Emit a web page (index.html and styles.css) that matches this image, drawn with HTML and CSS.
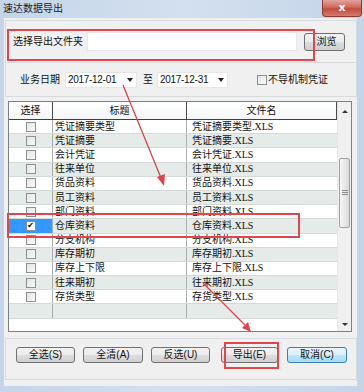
FILE: index.html
```html
<!DOCTYPE html>
<html lang="zh-CN">
<head>
    <meta charset="UTF-8">
    <title>速达数据导出</title>
    <link rel="stylesheet" href="styles.css">
</head>
<body>
    <div class="window">
        <div class="titlebar">
            <span class="title">速达数据导出</span>
            <div class="close">x</div>
        </div>

        <div class="client">
            <div class="panel folder-panel">
                <span class="label folder-label">选择导出文件夹</span>
                <div class="textbox"></div>
                <button class="btn browse">浏览</button>
            </div>

            <div class="panel date-panel">
                <span class="label date-label">业务日期</span>
                <div class="combo combo-from"><span>2017-12-01</span><span class="drop"></span></div>
                <span class="to">至</span>
                <div class="combo combo-to"><span>2017-12-31</span><span class="drop"></span></div>
                <label class="check-label"><span class="checkbox"></span>不导机制凭证</label>
            </div>

            <div class="grid">
                <div class="grid-body">
                    <div class="row head">
                        <div class="cell sel">选择</div>
                        <div class="cell name">标题</div>
                        <div class="cell file">文件名</div>
                    </div>
                    <div class="row">
                        <div class="cell sel"><span class="checkbox"></span></div>
                        <div class="cell name">凭证摘要类型</div>
                        <div class="cell file">凭证摘要类型.XLS</div>
                    </div>
                    <div class="row alt">
                        <div class="cell sel"><span class="checkbox"></span></div>
                        <div class="cell name">凭证摘要</div>
                        <div class="cell file">凭证摘要.XLS</div>
                    </div>
                    <div class="row">
                        <div class="cell sel"><span class="checkbox"></span></div>
                        <div class="cell name">会计凭证</div>
                        <div class="cell file">会计凭证.XLS</div>
                    </div>
                    <div class="row alt">
                        <div class="cell sel"><span class="checkbox"></span></div>
                        <div class="cell name">往来单位</div>
                        <div class="cell file">往来单位.XLS</div>
                    </div>
                    <div class="row">
                        <div class="cell sel"><span class="checkbox"></span></div>
                        <div class="cell name">货品资料</div>
                        <div class="cell file">货品资料.XLS</div>
                    </div>
                    <div class="row alt">
                        <div class="cell sel"><span class="checkbox"></span></div>
                        <div class="cell name">员工资料</div>
                        <div class="cell file">员工资料.XLS</div>
                    </div>
                    <div class="row">
                        <div class="cell sel"><span class="checkbox"></span></div>
                        <div class="cell name">部门资料</div>
                        <div class="cell file">部门资料.XLS</div>
                    </div>
                    <div class="row alt selected">
                        <div class="cell sel"><span class="checkbox checked">✔</span></div>
                        <div class="cell name">仓库资料</div>
                        <div class="cell file">仓库资料.XLS</div>
                    </div>
                    <div class="row">
                        <div class="cell sel"><span class="checkbox"></span></div>
                        <div class="cell name">分支机构</div>
                        <div class="cell file">分支机构.XLS</div>
                    </div>
                    <div class="row alt">
                        <div class="cell sel"><span class="checkbox"></span></div>
                        <div class="cell name">库存期初</div>
                        <div class="cell file">库存期初.XLS</div>
                    </div>
                    <div class="row">
                        <div class="cell sel"><span class="checkbox"></span></div>
                        <div class="cell name">库存上下限</div>
                        <div class="cell file">库存上下限.XLS</div>
                    </div>
                    <div class="row alt">
                        <div class="cell sel"><span class="checkbox"></span></div>
                        <div class="cell name">往来期初</div>
                        <div class="cell file">往来期初.XLS</div>
                    </div>
                    <div class="row">
                        <div class="cell sel"><span class="checkbox"></span></div>
                        <div class="cell name">存货类型</div>
                        <div class="cell file">存货类型.XLS</div>
                    </div>
                    <div class="row alt">
                        <div class="cell sel"></div>
                        <div class="cell name"></div>
                        <div class="cell file"></div>
                    </div>
                </div>
                <div class="scrollbar">
                    <div class="sb-btn sb-up"><span class="tri-up"></span></div>
                    <div class="sb-track"><div class="sb-thumb"><span class="grip"></span></div></div>
                    <div class="sb-btn sb-down"><span class="tri-down"></span></div>
                </div>
            </div>

            <div class="panel button-panel">
                <button class="btn act w59">全选(S)</button>
                <button class="btn act w60">全清(A)</button>
                <button class="btn act w59">反选(U)</button>
                <button class="btn act export">导出(E)</button>
                <button class="btn act w60 default">取消(C)</button>
            </div>
        </div>

        <!-- red annotation marks drawn over the dialog -->
        <div class="mark mark-folder"></div>
        <div class="mark mark-row"></div>
        <div class="mark mark-export"></div>
        <svg class="arrows" width="364" height="392" viewBox="0 0 364 392">
            <line x1="123" y1="85" x2="161" y2="178" />
            <polygon points="164,186 157,177 165,174" />
            <line x1="203" y1="283" x2="245" y2="325" />
            <polygon points="251,332 242,328 248,322" />
        </svg>
    </div>
</body>
</html>
```

FILE: styles.css
```css
body {
    margin: 0;
    font-family: "Liberation Sans", "Noto Sans CJK SC", sans-serif;
    font-size: 10px;
    color: #111;
}
.window {
    position: relative;
    width: 364px;
    height: 392px;
    display: flex;
    flex-direction: column;
    background: linear-gradient(90deg, #c4d5e9, #d3e0ef 50%, #c4d5e9);
    overflow: hidden;
}
.titlebar {
    height: 18px;
    flex: none;
    display: flex;
    align-items: center;
    padding-left: 3px;
}
.title {
    line-height: 12px;
    color: #1b1b1b;
}
.close {
    align-self: flex-start;
    margin-left: auto;
    margin-right: 2px;
    width: 40px;
    height: 17px;
    box-sizing: border-box;
    border: 1px solid #8c3a34;
    border-top: none;
    border-radius: 0 0 4px 4px;
    background: linear-gradient(#e3a59c, #d0675b 45%, #c44b3e 55%, #d47b6d);
    color: #fff;
    font-family: "DejaVu Sans", sans-serif;
    font-weight: bold;
    font-size: 11px;
    line-height: 15px;
    text-align: center;
}
.client {
    flex: 1;
    margin: 0 7px 6px 4px;
    background: #f0f0f0;
    display: flex;
    flex-direction: column;
}
.panel {
    box-sizing: border-box;
    margin-left: 1px;
    border: 1px solid #d6dbe0;
    display: flex;
    align-items: center;
}
.folder-panel {
    margin-top: 2px;
    height: 42px;
    padding-left: 7px;
    border-bottom: none;
}
.label {
    line-height: 12px;
}
.folder-label {
    width: 74px;
    flex: none;
}
.textbox {
    width: 210px;
    height: 19px;
    box-sizing: border-box;
    border: 1px solid #e4e8ec;
    background: #fff;
}
.btn {
    font-family: "Liberation Sans", "Noto Sans CJK SC", sans-serif;
    font-size: 10px;
    color: #111;
    padding: 0;
    box-sizing: border-box;
    border: 1px solid #707070;
    border-radius: 3px;
    background: linear-gradient(#f2f2f2, #ebebeb 50%, #dddddd 51%, #cfcfcf);
    line-height: 14px;
}
.browse {
    margin-left: 7px;
    width: 41px;
    height: 18px;
    padding-left: 4px;
}
.date-panel {
    height: 35px;
    padding-left: 14px;
}
.date-label {
    width: 40px;
}
.combo {
    height: 16px;
    box-sizing: border-box;
    border: 1px solid #e6e6e6;
    background: #fff;
    display: flex;
    align-items: center;
    justify-content: space-between;
    padding: 0 3px 0 2px;
    letter-spacing: -0.3px;
    line-height: 12px;
}
.combo-from {
    margin-left: 5px;
    width: 72px;
}
.combo-to {
    width: 71px;
}
.drop {
    width: 0;
    height: 0;
    border-left: 3px solid transparent;
    border-right: 3px solid transparent;
    border-top: 4px solid #222;
}
.to {
    margin: 0 4px 0 6px;
    line-height: 12px;
}
.check-label {
    margin-left: 29px;
    display: flex;
    align-items: center;
    gap: 1px;
    line-height: 12px;
}
.checkbox {
    display: inline-block;
    width: 10px;
    height: 10px;
    box-sizing: border-box;
    border: 1px solid #8e8f8f;
    background: linear-gradient(135deg, #e4e4e4, #fafafa);
}
.checkbox.checked {
    background: #fff;
    font-family: "DejaVu Sans", sans-serif;
    font-size: 8px;
    line-height: 8px;
    text-align: center;
    color: #000;
}
.grid {
    margin: 4px 0 0 4px;
    width: 344px;
    height: 231px;
    box-sizing: border-box;
    border: 1px solid #7b7f86;
    background: #fff;
    display: flex;
}
.grid-body {
    flex: 1;
}
.row {
    display: flex;
    height: 14.2px;
    box-sizing: border-box;
    border-bottom: 1px solid #d2d9d6;
    line-height: 12px;
}
.row.alt {
    background: #e5ebe8;
}
.row.head {
    height: 18px;
    background: linear-gradient(#ffffff, #f4f5f6);
    border-bottom: 1px solid #3f3f3f;
}
.cell {
    box-sizing: border-box;
    display: flex;
    align-items: center;
    overflow: hidden;
    white-space: nowrap;
}
.sel {
    width: 44px;
    justify-content: center;
    border-right: 1px solid #a9aeb0;
}
.name {
    width: 134px;
    padding-left: 2px;
    border-right: 1px solid #a9aeb0;
}
.file {
    width: 150px;
    padding-left: 5px;
    font-family: "Liberation Serif", "Noto Sans CJK SC", serif;
    font-size: 10px;
}
.head .cell {
    justify-content: center;
    padding-left: 0;
    border-color: #4a4a4a;
}
.head .file {
    border-right: 1px solid #4a4a4a;
}
.selected .sel {
    background: #3399ff;
}
.selected {
    background: #fff;
}
.scrollbar {
    width: 14px;
    display: flex;
    flex-direction: column;
    background: #f0f0f0;
    border-left: 1px solid #e6e6e6;
}
.sb-btn {
    display: flex;
    align-items: center;
    justify-content: center;
}
.sb-up {
    height: 18px;
}
.sb-down {
    height: 14px;
}
.tri-up {
    border-left: 3px solid transparent;
    border-right: 3px solid transparent;
    border-bottom: 3px solid #333;
}
.tri-down {
    border-left: 3px solid transparent;
    border-right: 3px solid transparent;
    border-top: 3px solid #333;
}
.sb-track {
    flex: 1;
    padding: 38px 1px 0 1px;
}
.sb-thumb {
    height: 70px;
    box-sizing: border-box;
    border: 1px solid #a2a2a2;
    border-radius: 2px;
    background: linear-gradient(90deg, #f6f6f6, #e6e6e6 60%, #d8d8d8);
    padding-top: 31px;
}
.grip {
    display: block;
    width: 6px;
    height: 5px;
    margin: 0 auto;
    background: repeating-linear-gradient(#8a8a8a 0 1px, transparent 1px 2px);
}
.button-panel {
    margin-top: 6px;
    height: 42px;
    align-items: flex-start;
    padding: 8px 0 0 10px;
}
.act {
    height: 16px;
    margin-right: 8px;
}
.w59 {
    width: 59px;
}
.w60 {
    width: 60px;
}
.export {
    width: 57px;
    margin-left: 3px;
    margin-right: 9px;
}
.default {
    border-color: #3c7fb1;
    background: linear-gradient(#eaf6fd, #d9f0fc 50%, #bee6fd 51%, #a7d9f5);
}
.mark {
    position: absolute;
    box-sizing: border-box;
    border: 2px solid #e0464c;
}
.mark-folder {
    left: 7px;
    top: 29px;
    width: 308px;
    height: 32px;
}
.mark-row {
    left: 7px;
    top: 213px;
    width: 293px;
    height: 25px;
}
.mark-export {
    left: 224px;
    top: 342px;
    width: 55px;
    height: 27px;
}
.arrows {
    position: absolute;
    left: 0;
    top: 0;
    pointer-events: none;
}
.arrows line {
    stroke: #d9454a;
    stroke-width: 1.3;
}
.arrows polygon {
    fill: #d9454a;
}
```
